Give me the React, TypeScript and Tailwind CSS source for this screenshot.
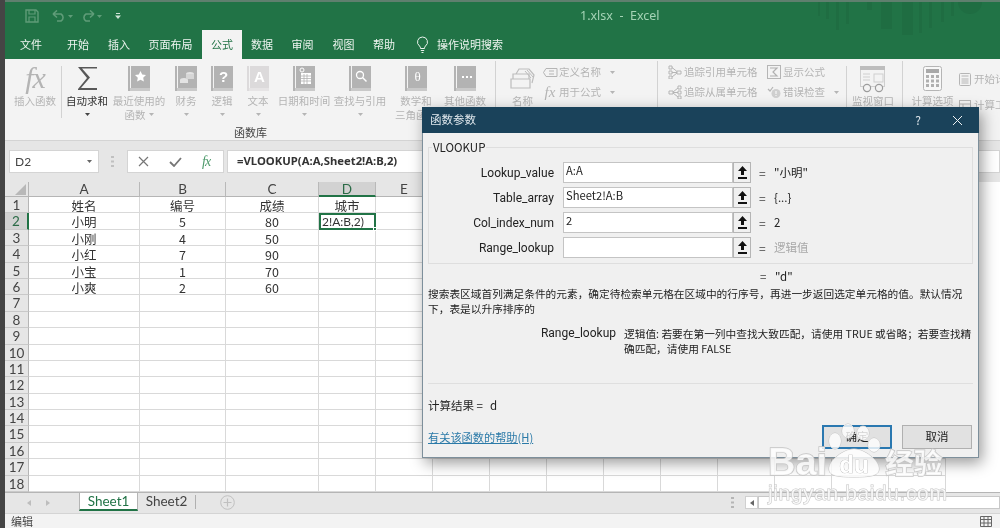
import type { ReactNode } from "react";

const CJK = "font-['DengXian','Noto_Sans_CJK_SC','Noto_Sans',sans-serif]";

const tabs = [
  { label: "文件", w: "w-[52px]" },
  { label: "开始", w: "w-[42px]" },
  { label: "插入", w: "w-[40px]" },
  { label: "页面布局", w: "w-[63px]" },
  { label: "公式", w: "w-[40px]", active: true },
  { label: "数据", w: "w-[40px]" },
  { label: "审阅", w: "w-[41px]" },
  { label: "视图", w: "w-[41px]" },
  { label: "帮助", w: "w-[40px]" },
];

const columns = [
  { name: "A", w: "w-[111px]" },
  { name: "B", w: "w-[86px]" },
  { name: "C", w: "w-[93px]" },
  { name: "D", w: "w-[57px]" },
  { name: "E", w: "w-[57px]" },
  { name: "F", w: "w-[57px]" },
  { name: "G", w: "w-[57px]" },
  { name: "H", w: "w-[57px]" },
  { name: "I", w: "w-[57px]" },
  { name: "J", w: "w-[57px]" },
  { name: "K", w: "w-[57px]" },
  { name: "L", w: "w-[57px]" },
  { name: "M", w: "w-[57px]" },
  { name: "N", w: "w-[57px]" },
];

const data: Record<number, string[]> = {
  1: ["姓名", "编号", "成绩", "城市"],
  2: ["小明", "5", "80"],
  3: ["小刚", "4", "50"],
  4: ["小红", "7", "90"],
  5: ["小宝", "1", "70"],
  6: ["小爽", "2", "60"],
};

const rows = Array.from({ length: 18 }, (_, i) => i + 1);

function Book({ children, faded }: { children?: ReactNode; faded?: boolean }) {
  const main = faded ? "#dcdadb" : "#b3b3b3";
  const low = faded ? "#e6e4e5" : "#c9c9c9";
  return (
    <svg width="22" height="26" viewBox="0 0 22 26">
      <rect x="0" y="0" width="2" height="25" fill={main} />
      <rect x="3" y="0" width="19" height="22" fill={main} />
      <rect x="2" y="22" width="20" height="3" fill={low} />
      {children}
    </svg>
  );
}

function Caret({ dark }: { dark?: boolean }) {
  return (
    <svg width="5" height="3" viewBox="0 0 5 3" className="inline-block">
      <path d="M0 0h5L2.500 3z" fill={dark ? "#444" : "#b5b5b5"} />
    </svg>
  );
}

function RibbonButton({
  w,
  icon,
  line1,
  line2,
  caret,
  dark,
}: {
  w: string;
  icon: ReactNode;
  line1: string;
  line2?: string;
  caret?: boolean;
  dark?: boolean;
}) {
  return (
    <div className={`${w} flex flex-col items-center shrink-0 pt-[7px]`}>
      <div className="h-[27px] flex items-start justify-center">{icon}</div>
      <div className={`mt-[1px] text-[10.5px] leading-[14px] whitespace-nowrap ${dark ? "text-[#333]" : "text-[#b4b4b4]"}`}>
        {line1}
      </div>
      <div className="h-[13px] leading-[13px] text-[10.5px] text-[#b4b4b4] whitespace-nowrap flex items-center gap-[3px]">
        {line2}
        {caret && <Caret dark={dark} />}
      </div>
    </div>
  );
}

function SmallAction({ icon, label, caret }: { icon: ReactNode; label: string; caret?: boolean }) {
  return (
    <div className="h-[20px] flex items-center text-[10.5px] text-[#b4b4b4] whitespace-nowrap">
      <div className="w-[16px] flex justify-center shrink-0">{icon}</div>
      <span className="ml-[1px]">{label}</span>
      {caret && (
        <span className="ml-[9px] flex">
          <Caret />
        </span>
      )}
    </div>
  );
}

function Divider({ className }: { className: string }) {
  return <div className={`w-px bg-[#d2d2d2] shrink-0 ${className}`} />;
}

function RefButton() {
  return (
    <div className="w-[18px] h-full bg-[#f0f0f0] border border-[#b5b5b5] flex items-center justify-center shrink-0">
      <svg width="9" height="13" viewBox="0 0 9 13">
        <path d="M4.5 0 9 5H6v4H3V5H0z" fill="#111" />
        <rect x="0" y="11" width="9" height="2" fill="#111" />
      </svg>
    </div>
  );
}

function ArgRow({ label, value, result, muted }: { label: string; value: string; result: string; muted?: boolean }) {
  return (
    <div className="h-[21px] flex items-center">
      <div className="w-[122px] text-right text-[12px] text-[#222] pr-[9px] shrink-0 font-['Roboto',sans-serif]">{label}</div>
      <div className="w-[170px] h-full bg-white border border-[#c4c4c4] pl-[2px] text-[11.2px] leading-[15px] text-[#222] shrink-0">
        {value}
      </div>
      <RefButton />
      <div className="ml-[8px] w-[15px] text-[12px] text-[#444] shrink-0">=</div>
      <div className={`text-[11.5px] ${muted ? "text-[#a8a8a8]" : "text-[#222]"}`}>{result}</div>
    </div>
  );
}

function Dialog() {
  return (
    <div className={`absolute left-[422px] top-[107px] w-[557px] h-[351px] bg-[#f0f0f0] border border-[#7d8f9b] border-t-0 shadow-[3px_5px_14px_rgba(0,0,0,0.4)] flex flex-col ${CJK}`}>
      <div className="h-[26px] bg-[#1a425a] -mx-px flex items-center text-[#dfe7ec] shrink-0">
        <span className="ml-[8px] text-[11.5px]">函数参数</span>
        <span className="ml-auto mr-[31px] text-[12px]">?</span>
        <svg width="11" height="11" viewBox="0 0 11 11" className="mr-[16px]">
          <path d="M1 1l9 9M10 1l-9 9" stroke="#eef2f4" strokeWidth="1" />
        </svg>
      </div>

      <div className="relative mx-[5px] mt-[14px] h-[117px] border border-[#dedede] pt-[14px] pl-[12px] flex flex-col gap-[4px] shrink-0">
        <span className="absolute left-[3px] -top-[9px] bg-[#f0f0f0] pr-[1px] pl-[1px] text-[11.5px] leading-[16px] text-[#222]">VLOOKUP</span>
        <ArgRow label="Lookup_value" value="A:A" result={'"小明"'} />
        <ArgRow label="Table_array" value="Sheet2!A:B" result="{...}" />
        <ArgRow label="Col_index_num" value="2" result="2" />
        <ArgRow label="Range_lookup" value="" result="逻辑值" muted />
      </div>

      <div className="mt-[5px] h-[16px] pl-[337px] flex items-center text-[11.5px] text-[#222] shrink-0">
        <span className="w-[15px] text-[#444]">=</span>
        <span>"d"</span>
      </div>

      <div className="mt-[1px] ml-[5px] text-[10.7px] leading-[15px] text-[#222] whitespace-nowrap">
        <div>{"搜索表区域首列满足条件的元素\uFF0C确定待检索单元格在区域中的行序号\uFF0C再进一步返回选定单元格的值。默认情况"}</div>
        <div>{"下\uFF0C表是以升序排序的"}</div>
      </div>

      <div className="mt-[10px] flex text-[10.7px] leading-[15px] text-[#222]">
        <div className="w-[193px] text-right text-[12px] shrink-0 font-['Roboto',sans-serif]">Range_lookup</div>
        <div className="ml-[8px] whitespace-nowrap">
          <div>{"逻辑值: 若要在第一列中查找大致匹配\uFF0C请使用 TRUE 或省略\uFF1B若要查找精"}</div>
          <div>{"确匹配\uFF0C请使用 FALSE"}</div>
        </div>
      </div>

      <div className="mt-[27px] mx-[5px] h-px bg-[#dfdfdf] shrink-0" />

      <div className="mt-[13px] ml-[5px] flex text-[11.5px] leading-[16px] text-[#222]">
        <span className="w-[62px]">计算结果 =</span>
        <span>d</span>
      </div>

      <div className="mt-[12px] ml-[5px] mr-[6px] flex items-center">
        <a className="text-[11.2px] text-[#2b7aa8] underline">有关该函数的帮助(H)</a>
        <div className="ml-auto flex gap-[10px]">
          <button className="w-[70px] h-[24px] bg-[#e1e1e1] border-2 border-[#2a78b0] text-[11.5px] text-[#222]">确定</button>
          <button className="w-[70px] h-[24px] bg-[#e1e1e1] border border-[#b0b0b0] text-[11.5px] text-[#222]">取消</button>
        </div>
      </div>
    </div>
  );
}

function Watermark() {
  return (
    <div className="absolute left-[768px] top-[423px] w-[180px] pointer-events-none select-none text-white/80 [-webkit-text-stroke:1.4px_#c4c4c4] [paint-order:stroke_fill]">
      <div className="flex items-end h-[55px] font-['Liberation_Sans',sans-serif] font-bold text-[38px] leading-[32px]">
        <span>Bai</span>
        <svg width="56" height="55" viewBox="0 0 56 55" className="-ml-[1px] shrink-0">
          <g fill="#ffffff" fillOpacity="0.8" stroke="#c4c4c4" strokeWidth="1">
            <ellipse cx="9" cy="18" rx="6" ry="8" />
            <ellipse cx="22" cy="8" rx="6" ry="7" />
            <ellipse cx="37" cy="10" rx="6" ry="7" />
            <ellipse cx="48" cy="22" rx="6" ry="7" />
            <path d="M28 26c10 0 25 11 25 20 0 7-9 8-25 8S3 53 3 46c0-9 15-20 25-20z" />
          </g>
          <text x="28" y="50" textAnchor="middle" fontSize="24" fontWeight="700" fill="#ffffff" stroke="#b5b5b5" strokeWidth="0.7" fontFamily="Liberation Sans">du</text>
        </svg>
        <span className={`ml-[3px] text-[28.5px] leading-[32px] ${CJK}`}>经验</span>
      </div>
      <div className="mt-[3px] font-['Liberation_Sans',sans-serif] text-[21px] leading-[24px] tracking-[0.6px] whitespace-nowrap [-webkit-text-stroke:1px_#c4c4c4]">
        jingyan.baidu.com
      </div>
    </div>
  );
}

function Sheet() {
  return (
    <div className="flex-1 bg-white overflow-hidden font-['Lato','Noto_Sans_CJK_SC',sans-serif]">
      <div className="flex h-[15px]">
        <div className="w-[24px] bg-[#e6e6e6] border-r border-b border-[#b5b5b5] flex justify-end items-end pr-[2px] pb-[1px] shrink-0">
          <svg width="11" height="11" viewBox="0 0 11 11">
            <path d="M11 0v11H0z" fill="#b8b8b8" />
          </svg>
        </div>
        {columns.map((c) => (
          <div
            key={c.name}
            className={`${c.w} shrink-0 text-center text-[13.5px] leading-[15px] border-r border-[#b9b9b9] ${
              c.name === "D" ? "bg-[#d2d2d2] border-b-2 border-b-[#217346] text-[#2b6b47]" : "bg-[#e6e6e6] border-b border-b-[#b5b5b5] text-[#444]"
            }`}
          >
            {c.name}
          </div>
        ))}
      </div>
      {rows.map((r) => (
        <div key={r} className="flex h-[16.4px]">
          <div
            className={`w-[24px] shrink-0 text-center text-[13.5px] leading-[16px] border-b border-[#c9c9c9] ${
              r === 2 ? "bg-[#d2d2d2] border-r-2 border-r-[#217346] text-[#2b6b47]" : "bg-[#e6e6e6] border-r border-r-[#b5b5b5] text-[#444]"
            }`}
          >
            {r}
          </div>
          {columns.map((c, i) => {
            if (r === 2 && c.name === "D") {
              return (
                <div key={c.name} className={`${c.w} shrink-0 relative border-2 border-[#217346] bg-white text-[12px] leading-[13px] pl-[1px] text-[#333]`}>
                  2!A:B,2)
                  <span className="absolute -right-[3px] -bottom-[3px] w-[4px] h-[4px] bg-[#217346] border border-white" />
                </div>
              );
            }
            return (
              <div
                key={c.name}
                className={`${c.w} shrink-0 text-center text-[12.5px] leading-[18px] text-[#333] border-r border-b border-[#d9d9d9] ${CJK}`}
              >
                {data[r]?.[i]}
              </div>
            );
          })}
        </div>
      ))}
    </div>
  );
}

export default function App() {
  return (
    <div className={`relative w-[1000px] h-[528px] overflow-hidden flex bg-[#4b4f4d] blur-[0.45px] ${CJK}`}>
      <div className="w-[5px] shrink-0 bg-[#454545]" />
      <div className="flex-1 min-w-0 flex flex-col">
        <div className="h-[2px] bg-[#5f7f6e] shrink-0" />

        {/* title bar and tabs */}
        <div className="relative h-[57px] bg-[#217346] shrink-0 flex flex-col">
          <svg className="absolute left-[810px] top-0" width="185" height="36" viewBox="0 0 185 36">
            <g fill="#1f6d42">
              <rect x="3" y="0" width="2" height="14" />
              <rect x="11" y="0" width="3" height="17" />
              <rect x="21" y="0" width="3" height="28" />
              <rect x="31" y="0" width="3" height="22" />
              <rect x="52" y="0" width="5" height="8" />
              <rect x="66" y="0" width="11" height="27" />
              <rect x="87" y="0" width="11" height="33" />
              <rect x="104" y="0" width="3" height="31" />
              <rect x="114" y="0" width="3" height="26" />
              <rect x="126" y="0" width="3" height="20" />
              <rect x="136" y="0" width="3" height="14" />
              <circle cx="155" cy="0" r="12" />
            </g>
          </svg>
          <div className="h-[28px] relative flex items-center pl-[20px] shrink-0">
            <svg width="14" height="14" viewBox="0 0 14 14">
              <path d="M1 1h10l2 2v10H1z" fill="none" stroke="#5f9c78" strokeWidth="1.4" />
              <path d="M4 1v4h6V1M4 13V8h6v5" fill="none" stroke="#5f9c78" strokeWidth="1.2" />
            </svg>
            <svg width="14" height="12" viewBox="0 0 14 12" className="ml-[13px]">
              <path d="M1 4h8a4 4 0 0 1 0 7H5M1 4l4-3.500M1 4l4 3.500" fill="none" stroke="#5f9c78" strokeWidth="1.6" />
            </svg>
            <span className="ml-[2px] flex">
              <svg width="5" height="3" viewBox="0 0 5 3"><path d="M0 0h5L2.500 3z" fill="#5f9c78" /></svg>
            </span>
            <svg width="14" height="12" viewBox="0 0 14 12" className="ml-[8px]">
              <path d="M13 4H5a4 4 0 0 0 0 7h4M13 4L9 .5M13 4L9 7.500" fill="none" stroke="#5f9c78" strokeWidth="1.6" />
            </svg>
            <span className="ml-[2px] flex">
              <svg width="5" height="3" viewBox="0 0 5 3"><path d="M0 0h5L2.500 3z" fill="#5f9c78" /></svg>
            </span>
            <svg width="6" height="6" viewBox="0 0 6 6" className="ml-[13px]">
              <path d="M1 0h4v1H1zM0 2.500h6L3 6z" fill="#cfe3d6" />
            </svg>
            <span className="absolute left-[575px] top-[6px] text-[12.5px] leading-[16px] text-[#a4d3b5] font-['Noto_Sans',sans-serif] whitespace-pre">
              1.xlsx  -  Excel
            </span>
          </div>
          <div className="relative flex-1 flex items-stretch">
            {tabs.map((t) => (
              <div
                key={t.label}
                className={`${t.w} flex items-center justify-center text-[11px] shrink-0 ${
                  t.active ? "bg-[#f3f3f3] text-[#217346]" : "text-[#eef5f0]"
                }`}
              >
                {t.label}
              </div>
            ))}
            <svg width="13" height="18" viewBox="0 0 13 18" className="ml-[12px] self-center shrink-0">
              <path d="M6.500 1a5 5 0 0 0-3 9c.8.700 1 1.500 1 2.500h4c0-1 .2-1.800 1-2.500a5 5 0 0 0-3-9zM4.800 14.500h3.400M5.500 16.500h2" fill="none" stroke="#eaf3ed" strokeWidth="1" />
            </svg>
            <span className="ml-[8px] self-center text-[11px] text-[#eef5f0] whitespace-nowrap">操作说明搜索</span>
          </div>
        </div>

        {/* ribbon */}
        <div className="relative h-[82px] bg-[#f3f3f3] border-b border-[#d4d4d4] shrink-0 flex">
          <div className="w-[485px] flex flex-col shrink-0">
            <div className="h-[66px] flex">
              <RibbonButton
                w="w-[56px] pl-[4px]"
                line1="插入函数"
                icon={<span className="font-['Liberation_Serif',serif] italic text-[#b4b4b4] text-[30px] leading-[24px] tracking-[-1px]">fx</span>}
              />
              <Divider className="h-[52px] mt-[7px]" />
              <RibbonButton
                w="w-[50px]"
                dark
                caret
                line1="自动求和"
                icon={
                  <svg width="21" height="25" viewBox="0 0 21 25">
                    <path d="M20 3V1H1l9 11L1 23v1h19v-2H4l9-10.500L5 2.500h15z" fill="#585858" />
                  </svg>
                }
              />
              <RibbonButton
                w="w-[54px]"
                caret
                line1="最近使用的"
                line2="函数"
                icon={
                  <Book>
                    <path d="M12.500 5l1.700 3.600 3.800.5-2.800 2.700.7 3.800-3.400-1.900-3.400 1.900.7-3.800L7 9.100l3.800-.5z" fill="#fff" />
                  </Book>
                }
              />
              <RibbonButton
                w="w-[40px]"
                caret
                line1="财务"
                icon={
                  <Book>
                    <ellipse cx="9" cy="14" rx="4" ry="2" fill="#e3e3e3" />
                    <rect x="5" y="14" width="8" height="3" fill="#e3e3e3" />
                    <ellipse cx="15" cy="8" rx="4" ry="2" fill="#e3e3e3" />
                    <rect x="11" y="8" width="8" height="5" fill="#d6d6d6" />
                  </Book>
                }
              />
              <RibbonButton
                w="w-[32px]"
                caret
                line1="逻辑"
                icon={
                  <Book>
                    <text x="12.500" y="16" textAnchor="middle" fontSize="15" fontWeight="700" fontFamily="Liberation Sans" fill="#fff">?</text>
                  </Book>
                }
              />
              <RibbonButton
                w="w-[40px]"
                caret
                line1="文本"
                icon={
                  <Book faded>
                    <text x="12.500" y="16" textAnchor="middle" fontSize="15" fontWeight="700" fontFamily="Liberation Sans" fill="#fff">A</text>
                  </Book>
                }
              />
              <RibbonButton
                w="w-[52px]"
                caret
                line1="日期和时间"
                icon={
                  <Book>
                    <circle cx="9" cy="4" r="2" fill="none" stroke="#fff" strokeWidth="1" />
                    <rect x="8" y="7" width="10" height="11" fill="#fff" />
                    <path d="M8 10h10M8 12.500h10M8 15h10M11 8v10M14 8v10" stroke="#b3b3b3" strokeWidth="0.8" />
                  </Book>
                }
              />
              <RibbonButton
                w="w-[60px]"
                caret
                line1="查找与引用"
                icon={
                  <Book>
                    <circle cx="11" cy="9" r="3.500" fill="none" stroke="#fff" strokeWidth="1.300" />
                    <path d="M13.500 11.500l4 4" stroke="#fff" strokeWidth="1.500" />
                  </Book>
                }
              />
              <RibbonButton
                w="w-[52px]"
                line1="数学和"
                line2="三角函数"
                icon={
                  <Book>
                    <text x="12.500" y="15" textAnchor="middle" fontSize="13" fontFamily="Liberation Serif" fill="#fff">θ</text>
                  </Book>
                }
              />
              <RibbonButton
                w="w-[46px]"
                caret
                line1="其他函数"
                icon={
                  <Book>
                    <path d="M8 11h2M12 11h2M16 11h2" stroke="#fff" strokeWidth="2" />
                  </Book>
                }
              />
            </div>
            <div className="flex-1 pl-[229px] pt-[1px] text-[11px] text-[#444] leading-[15px]">函数库</div>
          </div>
          <Divider className="h-[70px] mt-[2px] ml-[5px]" />

          <div className="w-[161px] flex shrink-0">
            <RibbonButton
              w="w-[49px] ml-[2px]"
              line1="名称"
              icon={
                <svg width="26" height="22" viewBox="0 0 26 22" className="mt-[1px]">
                  <path d="M1 12h19v9H1zM3 12V7h16v5M6 7l3-5h10l5 6-2 8" fill="#f3f3f3" stroke="#bdbdbd" strokeWidth="1.200" />
                  <path d="M15 4l6 7M17 3l6 7" stroke="#bdbdbd" strokeWidth="1" />
                </svg>
              }
            />
            <div className="pt-[3px] -ml-[5px] flex flex-col">
              <SmallAction
                caret
                label="定义名称"
                icon={
                  <svg width="15" height="9" viewBox="0 0 15 9">
                    <path d="M3 .5h11v8H3L.5 4.500zM6 3h5M6 6h5" fill="none" stroke="#b5b5b5" strokeWidth="1" />
                  </svg>
                }
              />
              <SmallAction
                label="用于公式"
                caret
                icon={<span className="font-['Liberation_Serif',serif] italic text-[15px] text-[#b4b4b4] leading-none">fx</span>}
              />
            </div>
          </div>
          <Divider className="h-[70px] mt-[2px]" />

          <div className="w-[188px] flex shrink-0 pl-[9px] pt-[3px]">
            <div className="flex flex-col w-[99px] shrink-0">
              <SmallAction
                label="追踪引用单元格"
                icon={
                  <svg width="14" height="14" viewBox="0 0 14 14">
                    <path d="M1 1h3v3H1zM1 6h3v3H1zM1 11h3v3H1zM9 6h4v3H9zM4 2.500l5 4M4 7.500h5M4 12l5-4" fill="none" stroke="#b5b5b5" strokeWidth="1" />
                  </svg>
                }
              />
              <SmallAction
                label="追踪从属单元格"
                icon={
                  <svg width="14" height="14" viewBox="0 0 14 14">
                    <path d="M10 1h3v3h-3zM10 6h3v3h-3zM10 11h3v3h-3zM1 6h4v3H1zM5 7l5-4M5 7.500h5M5 8l5 4" fill="none" stroke="#b5b5b5" strokeWidth="1" />
                  </svg>
                }
              />
            </div>
            <div className="flex flex-col">
              <SmallAction
                label="显示公式"
                icon={
                  <svg width="14" height="14" viewBox="0 0 14 14">
                    <rect x=".5" y=".5" width="13" height="13" fill="none" stroke="#b5b5b5" />
                    <path d="M3 3h7L6 7l4 4H3" fill="none" stroke="#b0b0b0" strokeWidth="1.200" />
                  </svg>
                }
              />
              <SmallAction
                label="错误检查"
                caret
                icon={
                  <svg width="15" height="13" viewBox="0 0 15 13">
                    <path d="M1 3l2 2 3-4" fill="none" stroke="#b5b5b5" strokeWidth="1.200" />
                    <circle cx="9" cy="7.500" r="4.500" fill="#cfcfcf" />
                    <path d="M9 5v3M9 9v1" stroke="#fff" strokeWidth="1" />
                  </svg>
                }
              />
            </div>
          </div>
          <Divider className="h-[52px] mt-[7px]" />

          <RibbonButton
            w="w-[52px]"
            line1="监视窗口"
            icon={
              <svg width="26" height="27" viewBox="0 0 26 27">
                <rect x=".5" y=".5" width="24" height="20" fill="#f3f3f3" stroke="#cfcfcf" />
                <rect x="0" y="0" width="25" height="4" fill="#bdbdbd" />
                <rect x="14" y="8" width="9" height="8" fill="none" stroke="#cfcfcf" />
                <path d="M3 8h7M3 11h7M3 14h7" stroke="#cfcfcf" />
                <circle cx="7" cy="22" r="3.600" fill="#f3f3f3" stroke="#9c9c9c" strokeWidth="1.200" />
                <circle cx="19" cy="22" r="3.600" fill="#f3f3f3" stroke="#9c9c9c" strokeWidth="1.200" />
              </svg>
            }
          />
          <Divider className="h-[70px] mt-[2px] ml-[3px]" />

          <RibbonButton
            w="w-[59px]"
            line1="计算选项"
            icon={
              <svg width="19" height="25" viewBox="0 0 19 25">
                <rect x=".5" y=".5" width="18" height="24" rx="2" fill="#f8f8f8" stroke="#b5b5b5" />
                <rect x="3" y="3" width="13" height="4" fill="#a9a9a9" />
                <path d="M3 9h3v3H3zM8 9h3v3H8zM13 9h3v3h-3zM3 13.500h3v3H3zM8 13.500h3v3H8zM13 13.500h3v3h-3zM3 18h3v3H3zM8 18h3v3H8zM13 18h3v3h-3z" fill="#b0b0b0" />
              </svg>
            }
          />
          <div className="flex flex-col pt-[10px] -ml-[3px] text-[10.5px] text-[#b4b4b4] whitespace-nowrap">
            <div className="h-[20px] flex items-center">
              <svg width="12" height="13" viewBox="0 0 12 13">
                <rect x=".5" y=".5" width="11" height="12" rx="1" fill="none" stroke="#b5b5b5" />
                <path d="M2.500 3h7M2.500 6h7M2.500 8h7M2.500 10h7" stroke="#b5b5b5" />
              </svg>
              <span className="ml-[3px]">开始计算</span>
            </div>
            <div className="h-[20px] mt-[6px] flex items-center">
              <svg width="12" height="11" viewBox="0 0 12 11">
                <rect x=".5" y=".5" width="11" height="10" fill="none" stroke="#b5b5b5" />
                <path d="M.5 4h11M4 4v7" stroke="#b5b5b5" />
              </svg>
              <span className="ml-[3px]">计算工作表</span>
            </div>
          </div>
        </div>

        {/* formula bar */}
        <div className="h-[41px] bg-[#e6e6e6] shrink-0 flex items-start pt-[9px] pl-[4px]">
          <div className="w-[90px] h-[23px] bg-white border border-[#d4d4d4] flex items-center pl-[5px] text-[12px] text-[#444] font-['Lato',sans-serif] shrink-0">
            D2
            <span className="ml-auto mr-[6px] flex">
              <svg width="5" height="3" viewBox="0 0 5 3"><path d="M0 0h5L2.500 3z" fill="#666" /></svg>
            </span>
          </div>
          <svg width="3" height="11" viewBox="0 0 3 11" className="ml-[12px] mt-[6px] shrink-0">
            <path d="M0 0h3v2H0zM0 4.500h3v2H0zM0 9h3v2H0z" fill="#c0c0c0" />
          </svg>
          <div className="ml-[13px] w-[97px] h-[23px] bg-white border border-[#d4d4d4] flex items-center shrink-0">
            <svg width="11" height="11" viewBox="0 0 11 11" className="ml-[10px]">
              <path d="M1 1l9 9M10 1l-9 9" stroke="#767676" strokeWidth="1.200" />
            </svg>
            <svg width="13" height="10" viewBox="0 0 13 10" className="ml-[20px]">
              <path d="M1 5l4 4 7-8" fill="none" stroke="#767676" strokeWidth="1.800" />
            </svg>
            <span className="ml-[20px] font-['Liberation_Serif',serif] italic text-[14px] text-[#4d9a6b] tracking-[-1px] leading-none">fx</span>
          </div>
          <div className="ml-[3px] flex-1 h-[23px] bg-white border border-[#d4d4d4] pl-[9px] text-[11.3px] leading-[20px] font-bold text-[#333] font-['Noto_Sans',sans-serif] whitespace-nowrap">
            =VLOOKUP(A:A,Sheet2!A:B,2)
          </div>
        </div>

        <Sheet />

        {/* sheet tabs */}
        <div className="h-[21px] bg-[#e6e6e6] border-t border-[#b5b5b5] shrink-0 flex font-['Lato',sans-serif]">
          <div className="w-[74px] flex items-center pl-[22px] gap-[15px] shrink-0">
            <svg width="4" height="6" viewBox="0 0 4 6"><path d="M4 0v6L0 3z" fill="#bdbdbd" /></svg>
            <svg width="4" height="6" viewBox="0 0 4 6"><path d="M0 0v6l4-3z" fill="#bdbdbd" /></svg>
          </div>
          <div className="w-[59px] h-[18px] bg-white border-x border-b-2 border-x-[#b5b5b5] border-b-[#217346] text-center text-[13.5px] leading-[16px] text-[#217346] shrink-0">Sheet1</div>
          <div className="w-[57px] h-[18px] text-center text-[13.5px] leading-[16px] text-[#444] shrink-0">Sheet2</div>
          <div className="w-px h-[14px] mt-[2px] bg-[#b0b0b0] shrink-0" />
          <svg width="15" height="15" viewBox="0 0 15 15" className="ml-[24px] mt-[2px] shrink-0">
            <circle cx="7.500" cy="7.500" r="6.800" fill="none" stroke="#c0c0c0" />
            <path d="M7.500 3.500v8M3.500 7.500h8" stroke="#c0c0c0" strokeWidth="1.200" />
          </svg>
          <svg width="3" height="11" viewBox="0 0 3 11" className="ml-[496px] mt-[4px] shrink-0">
            <path d="M0 0h3v2H0zM0 4.500h3v2H0zM0 9h3v2H0z" fill="#b5b5b5" />
          </svg>
          <div className="ml-[11px] w-[13px] h-[13px] mt-[3px] bg-white border border-[#d0d0d0] flex items-center justify-center shrink-0">
            <svg width="4" height="6" viewBox="0 0 4 6"><path d="M4 0v6L0 3z" fill="#666" /></svg>
          </div>
          <div className="flex-1 h-[13px] mt-[3px] bg-white border border-[#c8c8c8]" />
        </div>

        {/* status bar */}
        <div className="h-[15px] bg-[#f3f3f3] border-t border-[#d4d4d4] shrink-0 flex items-center pl-[6px] pr-[8px] text-[11px] text-[#444]">
          <span>编辑</span>
          <svg width="12" height="11" viewBox="0 0 12 11" className="ml-auto">
            <path d="M.5.500h11v10H.5zM.5 3.500h11M.5 7h11M4 .5v10M8 .5v10" fill="none" stroke="#666" />
          </svg>
        </div>
      </div>

      <Dialog />
      <Watermark />
    </div>
  );
}
